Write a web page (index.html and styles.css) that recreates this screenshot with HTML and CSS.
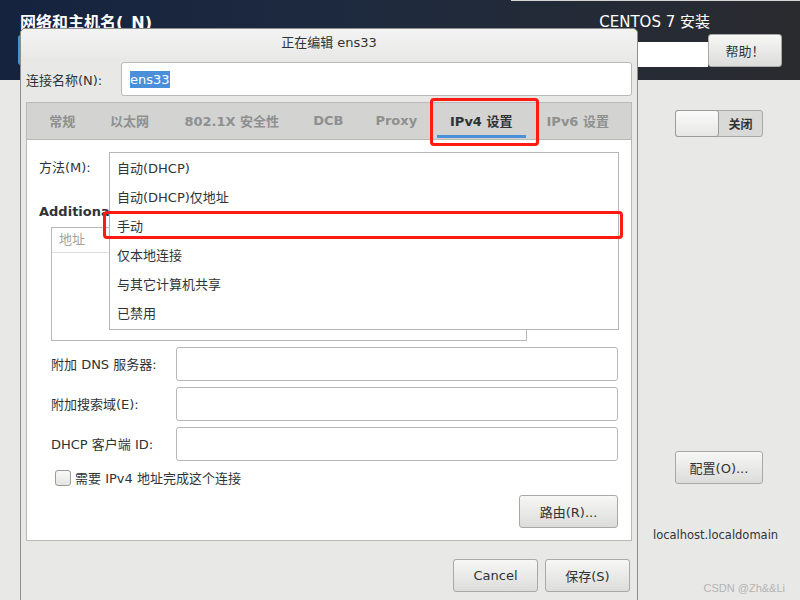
FILE: index.html
```html
<!DOCTYPE html>
<html lang="zh-CN">
<head>
<meta charset="utf-8">
<title>正在编辑 ens33</title>
<link rel="stylesheet" href="styles.css">
</head>
<body>
<div class="screen">
  <div class="topbar">
    <div class="topline"></div>
    <div class="top-left">
      <div class="spoke-title">网络和主机名(_N)</div>
      <div class="done-btn"></div>
    </div>
    <div class="top-right">
      <div class="product">CENTOS 7 安装</div>
      <div class="kb-row">
        <div class="kb-field"></div>
        <div class="btn help-btn">帮助！</div>
      </div>
    </div>
  </div>

  <div class="page-body">
    <div class="toggle">
      <div class="knob"></div>
      <div class="toggle-label">关闭</div>
    </div>
    <div class="btn config-btn">配置(O)...</div>
    <div class="hostname">localhost.localdomain</div>
  </div>

  <div class="dialog">
    <div class="titlebar">正在编辑 ens33</div>
    <div class="name-row">
      <div class="name-label">连接名称(N):</div>
      <div class="text-input name-input"><span class="selected">ens33</span></div>
    </div>
    <div class="tabs">
      <div class="tab tab-general">常规</div>
      <div class="tab tab-ethernet">以太网</div>
      <div class="tab tab-security">802.1X 安全性</div>
      <div class="tab tab-dcb">DCB</div>
      <div class="tab tab-proxy">Proxy</div>
      <div class="tab tab-ip active">IPv4 设置</div>
      <div class="tab tab-ip">IPv6 设置</div>
    </div>
    <div class="panel">
      <div class="method-row">方法(M):</div>
      <div class="section-title">Additional static addresses</div>
      <div class="addr-table">
        <div class="addr-head">地址</div>
      </div>
      <div class="form-grid">
        <div class="form-label">附加 DNS 服务器:</div>
        <div class="text-input"></div>
        <div class="form-label">附加搜索域(E):</div>
        <div class="text-input"></div>
        <div class="form-label">DHCP 客户端 ID:</div>
        <div class="text-input"></div>
      </div>
      <div class="check-row">
        <div class="checkbox"></div>
        <div class="check-label">需要 IPv4 地址完成这个连接</div>
      </div>
      <div class="btn route-btn">路由(R)...</div>

      <div class="popup">
        <div class="popup-item">自动(DHCP)</div>
        <div class="popup-item">自动(DHCP)仅地址</div>
        <div class="popup-item">手动</div>
        <div class="popup-item">仅本地连接</div>
        <div class="popup-item">与其它计算机共享</div>
        <div class="popup-item">已禁用</div>
      </div>
    </div>
    <div class="footer">
      <div class="btn footer-btn">Cancel</div>
      <div class="btn footer-btn">保存(S)</div>
    </div>
  </div>

  <div class="mark mark-tab"></div>
  <div class="mark mark-item"></div>
  <div class="watermark">CSDN @Zh&amp;&amp;Li</div>
</div>
</body>
</html>
```
FILE: styles.css
```css
* { box-sizing: border-box; }
body {
  margin: 0;
  font-family: "DejaVu Sans", "Noto Sans CJK SC", sans-serif;
  font-size: 13px;
  color: #2e3436;
}
.screen {
  width: 800px;
  height: 600px;
  position: relative;
  overflow: hidden;
  background: #e8e8e7;
}

/* top header */
.topbar {
  height: 80px;
  background: linear-gradient(90deg, #15233f 0%, #1e2a3e 45%, #2a2b2f 100%);
  display: flex;
  justify-content: space-between;
  padding: 0 18px;
  position: relative;
}
.topline {
  position: absolute;
  top: 0;
  left: 511px;
  right: 0;
  height: 1px;
  background: #d4d4d4;
}
.spoke-title {
  color: #fff;
  font-weight: bold;
  font-size: 16px;
  line-height: 20px;
  margin: 13px 0 0 2px;
}
.done-btn {
  width: 60px;
  height: 30px;
  margin-top: 2px;
  background: #4a90d9;
  border-radius: 3px;
}
.top-right {
  display: flex;
  flex-direction: column;
  align-items: flex-end;
}
.product {
  color: #fff;
  font-size: 15px;
  line-height: 20px;
  margin-top: 12px;
  margin-right: 72px;
}
.kb-row {
  display: flex;
  align-items: flex-end;
  margin-top: 2px;
}
.kb-field {
  width: 90px;
  height: 25px;
  background: #fff;
}

.btn {
  display: flex;
  align-items: center;
  justify-content: center;
  background: linear-gradient(#f7f7f6, #dcdcda);
  border: 1px solid #a9a9a7;
  border-radius: 3px;
  color: #2e3436;
  font-size: 13px;
}
.help-btn { width: 74px; height: 33px; }

/* underlying page */
.page-body {
  display: flex;
  flex-direction: column;
  padding-left: 653px;
}
.toggle {
  margin: 30px 0 0 22px;
  width: 88px;
  height: 27px;
  display: flex;
  border: 1px solid #a8a8a8;
  border-radius: 3px;
  background: #d9d9d8;
}
.knob {
  width: 44px;
  margin: -1px 0 -1px -1px;
  background: linear-gradient(#fbfbfb, #e6e6e5);
  border: 1px solid #9c9c9c;
  border-radius: 3px;
}
.toggle-label {
  flex: 1;
  display: flex;
  align-items: center;
  justify-content: center;
  font-size: 12px;
  font-weight: bold;
}
.config-btn {
  margin: 314px 0 0 22px;
  width: 88px;
  height: 33px;
}
.hostname {
  margin-top: 42px;
  line-height: 18px;
  font-size: 11.5px;
}

/* dialog window */
.dialog {
  position: absolute;
  left: 20px;
  top: 28px;
  width: 618px;
  height: 590px;
  background: #e8e8e7;
  border: 1px solid #8e8e8d;
  border-radius: 5px 5px 0 0;
  padding: 0 5px;
  display: flex;
  flex-direction: column;
}
.titlebar {
  margin: 0 -5px;
  height: 29px;
  line-height: 27px;
  text-align: center;
  background: linear-gradient(#f3f3f3, #e9e9e8);
  border-radius: 5px 5px 0 0;
}
.name-row {
  display: flex;
  align-items: center;
  margin-top: 4px;
  height: 34px;
}
.name-label { width: 95px; }
.text-input {
  background: #fff;
  border: 1px solid #b8b8b6;
  border-radius: 3px;
}
.name-input {
  flex: 1;
  height: 34px;
  display: flex;
  align-items: center;
  padding-left: 8px;
}
.selected {
  background: #4a90d9;
  color: #fff;
  line-height: 17px;
}

.tabs {
  margin-top: 6px;
  height: 38px;
  display: flex;
  background: #d3d3d2;
  border: 1px solid #b9b9b8;
  padding-left: 5px;
}
.tab {
  position: relative;
  display: flex;
  align-items: center;
  justify-content: center;
  padding-bottom: 2px;
  font-weight: bold;
  color: #8e908f;
  white-space: nowrap;
}
.tab-general { width: 60.5px; }
.tab-ethernet { width: 74px; }
.tab-security { width: 130.5px; }
.tab-dcb { width: 62.5px; }
.tab-proxy { width: 73.5px; }
.tab-ip { width: 96.5px; }
.tab.active { color: #2e3436; }
.tab.active::after {
  content: "";
  position: absolute;
  left: 4px;
  right: 4px;
  bottom: 1px;
  height: 3px;
  background: #4a90d9;
}

.panel {
  position: relative;
  height: 401px;
  background: #fff;
  border: 1px solid #b9b9b8;
  border-top: none;
  padding: 0 13px 0 12px;
  display: flex;
  flex-direction: column;
}
.method-row {
  margin-top: 18px;
  line-height: 20px;
}
.section-title {
  margin-top: 24px;
  line-height: 20px;
  font-weight: bold;
}
.addr-table {
  margin: 5px 0 0 12px;
  width: 476px;
  height: 114px;
  border: 1px solid #b8b8b6;
}
.addr-head {
  height: 25px;
  line-height: 24px;
  padding-left: 7px;
  color: #a2a2a2;
  border-bottom: 1px solid #dedede;
}
.form-grid {
  margin: 6px 0 0 12px;
  display: grid;
  grid-template-columns: 125px 1fr;
  grid-auto-rows: 34px;
  row-gap: 6px;
}
.form-label {
  display: flex;
  align-items: center;
  padding-bottom: 2px;
}
.check-row {
  margin: 8px 0 0 16px;
  height: 17px;
  display: flex;
  align-items: center;
}
.checkbox {
  width: 16px;
  height: 16px;
  border: 1px solid #9a9a98;
  border-radius: 3px;
  background: linear-gradient(#fafafa, #e4e4e3);
}
.check-label { margin-left: 4px; }
.route-btn {
  margin-top: 9px;
  align-self: flex-end;
  width: 99px;
  height: 33px;
}

.popup {
  position: absolute;
  left: 82px;
  top: 12px;
  width: 510px;
  height: 178px;
  background: #fff;
  border: 1px solid #b5b5b3;
  padding: 1px 0;
}
.popup-item {
  height: 29px;
  line-height: 29px;
  padding-left: 7px;
}

.footer {
  margin: 18px 2px 0 0;
  display: flex;
  justify-content: flex-end;
  gap: 7px;
}
.footer-btn { width: 85px; height: 33px; }

/* annotation marks */
.mark {
  position: absolute;
  border: 3px solid #ff1a12;
  border-radius: 4px;
}
.mark-tab { left: 430px; top: 98px; width: 109px; height: 48px; }
.mark-item { left: 103px; top: 211px; width: 520px; height: 28px; }

.watermark {
  position: absolute;
  right: 15px;
  bottom: 6px;
  font-family: "Liberation Sans", sans-serif;
  font-size: 11px;
  color: #b3b3b3;
}
```
